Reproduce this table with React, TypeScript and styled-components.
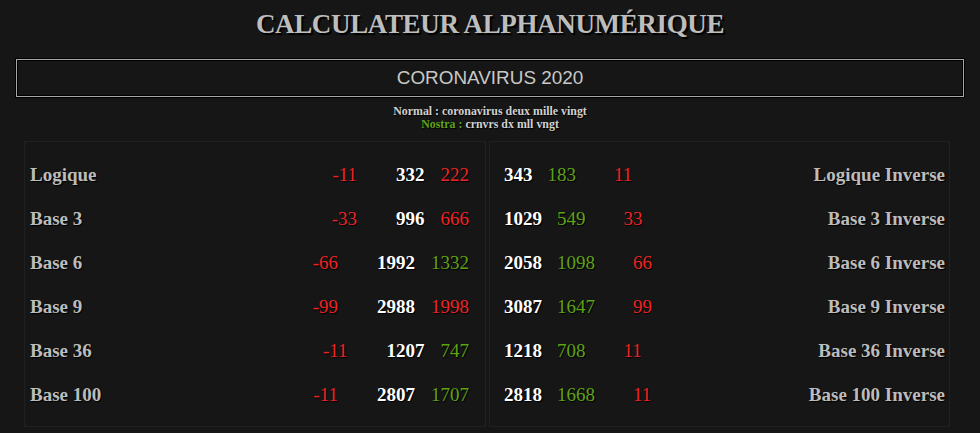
import styled, { createGlobalStyle } from 'styled-components'

//////////////////////////////////////////////////////////////////////

const GlobalStyle = createGlobalStyle`
    html, body {
        margin: 0;
        padding: 0;
        background: #161616;
    }
    body {
        font-family: "Liberation Serif", "Times New Roman", serif;
        color: #c8c8c8;
    }
`

const Page = styled.div`
    width: 980px;
    height: 433px;
    overflow: hidden;
`

const Title = styled.h1`
    margin: 0;
    padding-top: 8px;

    height: 32px;
    line-height: 32px;

    text-align: center;
    font-size: 27px;
    font-weight: bold;
    letter-spacing: -0.35px;
    color: #bdbdbd;
    text-shadow: 2px 2px 1px #000;
`

const Phrase = styled.div`
    margin: 19px 16px 0;
    height: 36px;

    display: flex;
    justify-content: center;
    align-items: center;

    border: 1px solid #a8a8a8;
    box-shadow: 0 0 0 1px #000, inset 0 0 0 1px #000;

    font-family: "Liberation Sans", Arial, sans-serif;
    font-size: 18.9px;
    color: #c8c8c8;
`

const Readings = styled.div`
    margin-top: 8px;

    text-align: center;
    font-size: 11.9px;
    line-height: 13px;
    font-weight: bold;
    color: #d0d0d0;
    text-shadow: 1px 1px 1px #000;

    .nostra { color: #5ea316; }
`

const Board = styled.div`
    margin: 10px 0 0 24px;
    width: 926px;

    display: grid;
    grid-template-columns: 462px 461px;
    gap: 3px;
`

const Panel = styled.div<{ $side: 'left' | 'right' }>`
    height: 286px;
    padding: ${({ $side }) => $side === 'left' ? '11px 16px 0 5px' : '11px 4px 0 14px'};
    box-sizing: border-box;

    display: grid;
    grid-auto-rows: 44px;

    border: 1px solid #202020;
`

const Row = styled.div<{ $side: 'left' | 'right' }>`
    display: flex;
    justify-content: space-between;
    align-items: center;
    flex-direction: ${({ $side }) => $side === 'left' ? 'row' : 'row-reverse'};

    font-size: 19px;
    font-weight: bold;
    text-shadow: 1px 1px 1px #000;
`

const Label = styled.span`
    color: #bcbcbc;
`

const Numbers = styled.span`
    display: flex;
    align-items: center;
    white-space: nowrap;
`

const Num = styled.span<{ $tone: 'red' | 'green' | 'white', $gap?: number }>`
    margin-right: ${({ $gap }) => $gap ?? 0}px;
    font-weight: ${({ $tone }) => $tone === 'white' ? 'bold' : 'normal'};
    color: ${({ $tone }) => $tone === 'red' ? '#f02424' : $tone === 'green' ? '#5ea316' : '#ffffff'};
`

//////////////////////////////////////////////////////////////////////

type Line = { label: string, neg: string, sum: string, sumTone: 'red' | 'green', val: string }

const left: Line[] = [
    { label: 'Logique', neg: '-11', val: '332', sum: '222', sumTone: 'red' },
    { label: 'Base 3', neg: '-33', val: '996', sum: '666', sumTone: 'red' },
    { label: 'Base 6', neg: '-66', val: '1992', sum: '1332', sumTone: 'green' },
    { label: 'Base 9', neg: '-99', val: '2988', sum: '1998', sumTone: 'red' },
    { label: 'Base 36', neg: '-11', val: '1207', sum: '747', sumTone: 'green' },
    { label: 'Base 100', neg: '-11', val: '2807', sum: '1707', sumTone: 'green' },
]

const right: Line[] = [
    { label: 'Logique Inverse', val: '343', sum: '183', sumTone: 'green', neg: '11' },
    { label: 'Base 3 Inverse', val: '1029', sum: '549', sumTone: 'green', neg: '33' },
    { label: 'Base 6 Inverse', val: '2058', sum: '1098', sumTone: 'green', neg: '66' },
    { label: 'Base 9 Inverse', val: '3087', sum: '1647', sumTone: 'green', neg: '99' },
    { label: 'Base 36 Inverse', val: '1218', sum: '708', sumTone: 'green', neg: '11' },
    { label: 'Base 100 Inverse', val: '2818', sum: '1668', sumTone: 'green', neg: '11' },
]

function App() {
    return (
        <Page>
            <GlobalStyle />
            <Title>CALCULATEUR ALPHANUMÉRIQUE</Title>

            <Phrase>CORONAVIRUS 2020</Phrase>

            <Readings>
                <div>Normal : coronavirus deux mille vingt</div>
                <div><span className="nostra">Nostra :</span> crnvrs dx mll vngt</div>
            </Readings>

            <Board>
                <Panel $side="left">
                    {left.map(line =>
                        <Row key={line.label} $side="left">
                            <Label>{line.label}</Label>
                            <Numbers>
                                <Num $tone="red" $gap={39}>{line.neg}</Num>
                                <Num $tone="white" $gap={16}>{line.val}</Num>
                                <Num $tone={line.sumTone}>{line.sum}</Num>
                            </Numbers>
                        </Row>
                    )}
                </Panel>
                <Panel $side="right">
                    {right.map(line =>
                        <Row key={line.label} $side="right">
                            <Label>{line.label}</Label>
                            <Numbers>
                                <Num $tone="white" $gap={15}>{line.val}</Num>
                                <Num $tone={line.sumTone} $gap={38}>{line.sum}</Num>
                                <Num $tone="red">{line.neg}</Num>
                            </Numbers>
                        </Row>
                    )}
                </Panel>
            </Board>
        </Page>
    )
}

export default App
